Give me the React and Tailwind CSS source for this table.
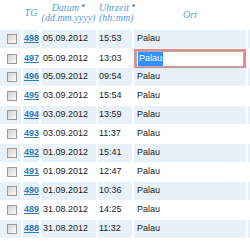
import React from 'react';

const rows = [
  { tg: 498, datum: '05.09.2012', zeit: '15:53', ort: 'Palau' },
  { tg: 497, datum: '05.09.2012', zeit: '13:03', ort: 'Palau', editing: true },
  { tg: 496, datum: '05.09.2012', zeit: '09:54', ort: 'Palau' },
  { tg: 495, datum: '03.09.2012', zeit: '15:54', ort: 'Palau' },
  { tg: 494, datum: '03.09.2012', zeit: '13:59', ort: 'Palau' },
  { tg: 493, datum: '03.09.2012', zeit: '11:37', ort: 'Palau' },
  { tg: 492, datum: '01.09.2012', zeit: '15:41', ort: 'Palau' },
  { tg: 491, datum: '01.09.2012', zeit: '12:47', ort: 'Palau' },
  { tg: 490, datum: '01.09.2012', zeit: '10:36', ort: 'Palau' },
  { tg: 489, datum: '31.08.2012', zeit: '14:25', ort: 'Palau' },
  { tg: 488, datum: '31.08.2012', zeit: '11:32', ort: 'Palau' },
];

const cols = 'grid grid-cols-[21px_16px_55px_34px_112px_1fr] gap-x-[2px]';

function Checkbox() {
  return <div className="w-[10px] h-[10px] border border-[#9a9a9a] bg-linear-to-br from-[#d2d2d2] to-[#fafafa]" />;
}

function Header() {
  return (
    <div className={`${cols} h-[29px] pb-[4px] items-center text-[#5a9ad6] italic text-[10px] leading-[10px] font-['Liberation_Serif',serif]`}>
      <div />
      <div className="text-center">TG</div>
      <div className="text-center whitespace-nowrap">
        <div>Datum <span className="text-[#2a3fd0] not-italic text-[8px] align-top">*</span></div>
        <div>(dd.mm.yyyy)</div>
      </div>
      <div className="pl-[1px] whitespace-nowrap">
        <div>Uhrzeit <span className="text-[#2a3fd0] not-italic text-[8px] align-top">*</span></div>
        <div>(hh:mm)</div>
      </div>
      <div className="text-center pt-[4px]">Ort</div>
      <div />
    </div>
  );
}

function Row({ row, index }) {
  const bg = index % 2 === 0 ? 'bg-[#e8f1f8]' : 'bg-white';
  return (
    <div className={`${cols} h-[18px] text-[9px] text-[#1c1c1c] font-['Liberation_Sans',Arial,sans-serif]`}>
      <div className={`${bg} flex items-center pl-[7px]`}><Checkbox /></div>
      <div className={`${bg} flex items-center pl-[1px]`}>
        <a href="#" className="text-[#2f7cb6] underline font-bold">{row.tg}</a>
      </div>
      <div className={`${bg} flex items-center pl-[2px]`}>{row.datum}</div>
      <div className={`${bg} flex items-center pl-[1px]`}>{row.zeit}</div>
      {row.editing ? (
        <div className={`${bg} flex items-stretch`}>
          <div className="flex-1 border-2 border-[#f38686] flex">
            <div className="flex-1 border border-[#9fb0c9] bg-white flex items-center pl-[1px]">
              <span className="bg-[#3390ff] text-white px-[1px]">{row.ort}</span>
            </div>
          </div>
        </div>
      ) : (
        <div className={`${bg} flex items-center pl-[3px]`}>{row.ort}</div>
      )}
      <div className={bg} />
    </div>
  );
}

export default function App() {
  return (
    <div className="w-[250px] h-[243px] bg-white overflow-hidden">
      <Header />
      <div className="flex flex-col gap-y-[1px] mt-[1px]">
        {rows.map((row, i) => (
          <Row key={row.tg} row={row} index={i} />
        ))}
      </div>
    </div>
  );
}
